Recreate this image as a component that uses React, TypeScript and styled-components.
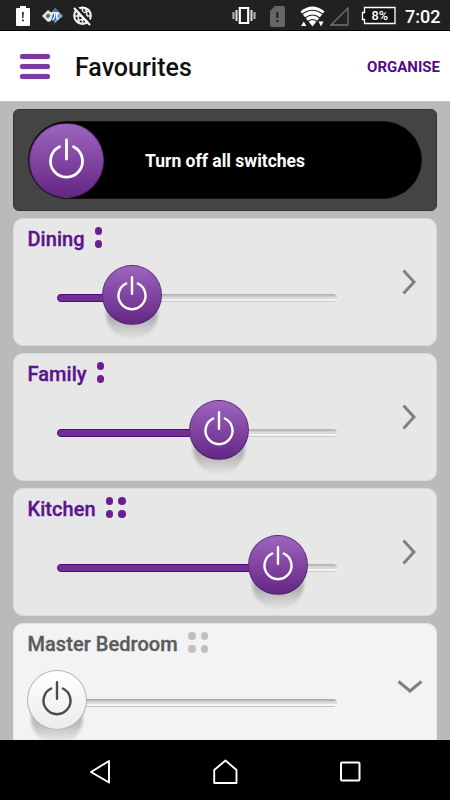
import React from "react";
import styled, { createGlobalStyle } from "styled-components";

const GlobalStyle = createGlobalStyle`
  * { box-sizing: border-box; }
  body { margin: 0; font-family: Roboto, "Liberation Sans", sans-serif; background: #bababa; }
  svg { display: block; flex: none; }
`;

const Screen = styled.div`
  width: 450px;
  height: 800px;
  display: flex;
  flex-direction: column;
  overflow: hidden;
  background: #bababa;
`;

const StatusBar = styled.div`
  height: 31px;
  flex: none;
  display: flex;
  align-items: flex-start;
  justify-content: space-between;
  background: #212121;
  border-bottom: 1px solid #050505;
`;

const StatusGroup = styled.div<{ $start?: number; $end?: number }>`
  height: 30px;
  display: flex;
  align-items: center;
  padding-left: ${(p) => p.$start ?? 0}px;
  padding-right: ${(p) => p.$end ?? 0}px;
`;

const Spacer = styled.span<{ $w: number }>`
  width: ${(p) => p.$w}px;
  flex: none;
`;

const Clock = styled.span`
  width: 35px;
  color: #fff;
  font-size: 18px;
  font-weight: 500;
  line-height: 30px;
  white-space: nowrap;
  padding-top: 3px;
`;

const AppBar = styled.header`
  height: 70px;
  flex: none;
  display: flex;
  align-items: center;
  padding: 0 10px 0 20px;
  background: #fff;
`;

const MenuButton = styled.div`
  width: 30px;
  height: 25px;
  display: flex;
  flex-direction: column;
  justify-content: space-between;
`;

const MenuLine = styled.span`
  height: 5px;
  border-radius: 3px;
  background: #7b3ba0;
  box-shadow: 0 0 1px #a97cc2;
`;

const Title = styled.h1`
  margin: 4px 0 0 25px;
  flex: 1;
  font-size: 25px;
  font-weight: 500;
  line-height: 30px;
  color: #101010;
`;

const Organise = styled.span`
  margin-top: 2px;
  font-size: 15px;
  font-weight: 700;
  line-height: 18px;
  color: #560a86;
`;

const Content = styled.main`
  height: 639px;
  flex: none;
  overflow: hidden;
  display: flex;
  flex-direction: column;
  gap: 7px;
  padding: 7px 13px 0;
  background: #bababa;
  border-top: 1px solid #c8c8c8;
`;

const AllOff = styled.section`
  height: 102px;
  flex: none;
  padding: 11px 14px 0 14px;
  border-radius: 6px;
  background: #444;
  border: 1px solid #333;
`;

const Pill = styled.div`
  height: 78px;
  border-radius: 39px;
  background: #000;
  border: 1px solid #101010;
  display: flex;
  align-items: center;
`;

const PillLabel = styled.span`
  margin: 1px 0 0 41px;
  color: #fff;
  font-size: 17.5px;
  font-weight: 700;
  line-height: 22px;
  white-space: nowrap;
`;

const Knob = styled.span<{ $size: number; $on: boolean }>`
  width: ${(p) => p.$size}px;
  height: ${(p) => p.$size}px;
  flex: none;
  display: flex;
  border-radius: 50%;
  border: 1px solid ${(p) => (p.$on ? "rgba(55, 20, 80, 0.45)" : "rgba(90, 90, 90, 0.4)")};
  background: ${(p) =>
    p.$on
      ? "linear-gradient(#9d66bd 0%, #9157b2 22%, #6a2c8a 90%, #642682 100%)"
      : "linear-gradient(#fff, #ebebeb)"};
`;

const Card = styled.section<{ $open?: boolean }>`
  height: 128px;
  flex: none;
  display: flex;
  justify-content: space-between;
  border-radius: 10px;
  background: ${(p) => (p.$open ? "#f3f3f3" : "#e7e7e7")};
  border: 1px solid ${(p) => (p.$open ? "#e5e5e5" : "#dadada")};
`;

const CardMain = styled.div`
  width: 324px;
  padding-left: 14px;
`;

const Name = styled.div<{ $on: boolean }>`
  height: 42px;
  display: flex;
  align-items: flex-start;
  font-size: 20px;
  font-weight: 500;
  line-height: 24px;
  letter-spacing: 0.05px;
  padding-top: 8px;
  margin-left: -0.5px;
  white-space: nowrap;
  -webkit-text-stroke: 0.35px currentColor;
  color: ${(p) => (p.$on ? "#5b148c" : "#5b5b5b")};
`;

const Dots = styled.span<{ $cols: number; $on: boolean; $gap: number }>`
  display: grid;
  grid-template-columns: repeat(${(p) => p.$cols}, 7.6px);
  gap: 5px;
  margin: 0.4px 0 0 ${(p) => p.$gap}px;
  color: ${(p) => (p.$on ? "#691e91" : "#c0c0c0")};
`;

const Dot = styled.i`
  width: 7.6px;
  height: 7.6px;
  border-radius: 50%;
  background: currentColor;
`;

const Slider = styled.div<{ $open?: boolean }>`
  position: relative;
  width: 280px;
  height: 8px;
  margin: 33px 0 0 29px;
  border-radius: 4px;
  background: ${(p) =>
    p.$open
      ? "linear-gradient(#aaa 0 1px, #bababa 1px 2px, #cecece 2px 3px, #dedede 3px 5px, #f6f6f6 5px 7px, #c3c3c3 7px)"
      : "linear-gradient(#b3b3b3 0 1px, #c0c0c0 1px 2px, #cdcdcd 2px 3px, #dadada 3px 5px, #f2f2f2 5px 7px, #cacaca 7px)"};
`;

const Fill = styled.div`
  height: 8px;
  border: 1px solid #57087f;
  border-radius: 4px;
  background: #6f3094;
`;

const Thumb = styled.div`
  position: absolute;
  top: -29px;
  width: 60px;
  height: 76px;
`;

const ThumbShadow = styled.span`
  position: absolute;
  left: 4px;
  top: 19px;
  width: 52px;
  height: 55px;
  border-radius: 0 0 26px 26px;
  background: linear-gradient(rgba(0, 0, 0, 0) 0, rgba(0, 0, 0, 0.24) 62%, rgba(0, 0, 0, 0.01) 100%);
  filter: blur(1.6px);
`;

const ThumbFace = styled.div`
  position: relative;
  display: flex;
`;

const Arrow = styled.div<{ $open?: boolean }>`
  width: 54px;
  display: flex;
  justify-content: center;
  align-items: flex-start;
  padding-top: ${(p) => (p.$open ? 56 : 49.5)}px;
  padding-left: ${(p) => (p.$open ? 1 : 0)}px;
`;

const NavBar = styled.nav`
  height: 60px;
  flex: none;
  display: grid;
  grid-template-columns: 1fr 25px 1fr;
  align-items: center;
  background: #000;
`;

const NavCell = styled.span<{ $align: "start" | "center" | "end" }>`
  display: flex;
  justify-content: ${(p) => p.$align};
  padding: ${(p) => (p.$align === "end" ? "4px 102px 0 0" : p.$align === "start" ? "4px 0 0 102px" : "3px 0 0")};
`;

function PowerKnob({ size, on }: { size: number; on: boolean }) {
  const small = size < 70;
  return (
    <Knob $size={size} $on={on}>
      <svg width={size - 2} height={size - 2} viewBox={small ? "-29 -29 58 58" : "-36.5 -36.5 73 73"} fill="none"
        stroke={on ? "#fff" : "#4b4b4b"} strokeWidth={small ? 2.4 : 2.8} strokeLinecap="round">
        {small ? (
          <path d="M-5.8 -11.5A13.5 13.5 0 1 0 5.8 -11.5M0 -17.8V-1.3" />
        ) : (
          <path d="M-7 -13.8A16 16 0 1 0 7 -13.8M0 -20.5V-1.5" />
        )}
      </svg>
    </Knob>
  );
}

type RoomProps = { name: string; cols: number; gap: number; value: number; on?: boolean; open?: boolean };

function Room({ name, cols, gap, value, on = false, open }: RoomProps) {
  return (
    <Card $open={open}>
      <CardMain>
        <Name $on={on}>
          {name}
          <Dots $cols={cols} $on={on} $gap={gap}>
            {Array.from({ length: cols * 2 }, (_, i) => <Dot key={i} />)}
          </Dots>
        </Name>
        <Slider $open={open}>
          {on && <Fill style={{ width: value }} />}
          <Thumb style={{ left: value - 30 }}>
            <ThumbShadow />
            <ThumbFace><PowerKnob size={60} on={on} /></ThumbFace>
          </Thumb>
        </Slider>
      </CardMain>
      <Arrow $open={open}>
        {open ? (
          <svg width="26" height="14" fill="none" stroke="#808080" strokeWidth="3"><path d="M1.5 1.5L13 11L24.5 1.5" /></svg>
        ) : (
          <svg width="14" height="26" fill="none" stroke="#808080" strokeWidth="3"><path d="M1.5 1.5L12 13L1.5 24.5" /></svg>
        )}
      </Arrow>
    </Card>
  );
}

function NotificationIcons() {
  return (
    <StatusGroup $start={16}>
      <svg width="14" height="30"><path d="M0 9q0-1 1-1h3V6h6v2h3q1 0 1 1v16q0 1-1 1H1q-1 0-1-1z" fill="#fff" /><path d="M6 12h1.8l-.3 6H6.300zM6 19.500h1.800v1.700H6z" fill="#222" /></svg>
      <Spacer $w={12} />
      <svg width="21" height="30">
        <path d="M13 8l8 8-8 7-6-7z" fill="#76a9dc" />
        <path d="M13 9l4 4-6 1 5 2-4 6-5-6z" fill="#245ca8" />
        <path d="M0 16l6-6 5 4-2 7-3 1z" fill="#e5eee7" />
        <path d="M3 16l3-3 3 2-3 4z" fill="#8eb04c" /><circle cx="6" cy="16" r="1.5" fill="#205fa1" />
        <path d="M9 13.5q3-2 8 0M12.5 13.5q1 4-2 6.500M15 13.500q-1 4 1 6" fill="none" stroke="#fff" strokeWidth="1.5" />
        <path d="M7 24h9" stroke="#3a3a3a" />
      </svg>
      <Spacer $w={10} />
      <svg width="20" height="30" fill="none">
        <circle cx="9.5" cy="15.7" r="8.3" stroke="#fff" strokeWidth="2" />
        <path d="M9.5 8v16M1 16h17M3 11q6 3 13 0M3 21q6-3 13 0M7 8q-4 8 0 16M12 8q4 8 0 16" stroke="#eee" strokeWidth="1.6" />
        <path d="M3 7L18 22.5" stroke="#212121" strokeWidth="2.6" /><path d="M1 8L17 25" stroke="#fff" strokeWidth="2" />
      </svg>
    </StatusGroup>
  );
}

function SystemIcons() {
  return (
    <StatusGroup $end={10}>
      <svg width="24" height="30" fill="none" stroke="#fff"><path d="M7.8 8h8.4v15H7.800z" strokeWidth="2.2" /><path d="M4.5 10v11M19.5 10v11" stroke="#ddd" strokeWidth="2" /><path d="M1.5 12v7M22.5 12v7" stroke="#bbb" strokeWidth="2" /></svg>
      <Spacer $w={14} />
      <svg width="15" height="30"><path d="M0 11l5-5h8q2 0 2 2v17q0 2-2 2H2q-2 0-2-2z" fill="#666" /><path d="M6.2 12h2.200v6H6.200zM6.200 20h2.200v2H6.200z" fill="#222" /></svg>
      <Spacer $w={15} />
      <svg width="25" height="30">
        <path d="M.5 11.5Q12.5 1.5 24.5 11.5L12.5 26.500Z" fill="#fff" />
        <path d="M2 14.3q10.5-8 21 0M5 18q7.500-6 15 0M8 21.500q4.500-4 9 0" fill="none" stroke="#222" strokeWidth="1.1" />
        <path d="M1 26l2.700-4.500 2.700 4.500zM18.500 21.500h5l-2.500 5z" fill="#fff" />
      </svg>
      <Spacer $w={5} />
      <svg width="20" height="30" fill="none" stroke="#737373" strokeWidth="1.3"><path d="M1 25L18 8v17z" /></svg>
      <Spacer $w={11} />
      <svg width="35" height="30"><path d="M3.5 7.5h30.500v16H3.500v-4H1.500v-7h2z" fill="#161616" stroke="#fff" strokeWidth="1.3" /><text x="10.5" y="20" fill="#fff" fontFamily="Roboto" fontSize="12.5" fontWeight="500" textLength="16.5" lengthAdjust="spacingAndGlyphs">8%</text></svg>
      <Spacer $w={9} />
      <Clock>7:02</Clock>
    </StatusGroup>
  );
}

export default function App() {
  return (
    <Screen>
      <GlobalStyle />
      <StatusBar><NotificationIcons /><SystemIcons /></StatusBar>
      <AppBar>
        <MenuButton><MenuLine /><MenuLine /><MenuLine /></MenuButton>
        <Title>Favourites</Title>
        <Organise>ORGANISE</Organise>
      </AppBar>
      <Content>
        <AllOff>
          <Pill>
            <PowerKnob size={75} on />
            <PillLabel>Turn off all switches</PillLabel>
          </Pill>
        </AllOff>
        <Room name="Dining" cols={1} gap={10.2} value={75} on />
        <Room name="Family" cols={1} gap={10.2} value={162} on />
        <Room name="Kitchen" cols={2} gap={10.2} value={221} on />
        <Room name="Master Bedroom" cols={2} gap={10.2} value={0} open />
      </Content>
      <NavBar>
        <NavCell $align="end"><svg width="22" height="26" fill="none" stroke="#fff" strokeWidth="1.9" strokeLinejoin="round"><path d="M20 2L2 13L20 23.5Z" /></svg></NavCell>
        <NavCell $align="center"><svg width="25" height="26" fill="none" stroke="#fff" strokeWidth="1.9" strokeLinejoin="round"><path d="M1.2 11L12.5 1.5L23.5 11V24H1.200Z" /></svg></NavCell>
        <NavCell $align="start"><svg width="22" height="22" fill="none" stroke="#fff" strokeWidth="2"><rect x="1" y="1.5" width="18.5" height="18" rx="1" /></svg></NavCell>
      </NavBar>
    </Screen>
  );
}
